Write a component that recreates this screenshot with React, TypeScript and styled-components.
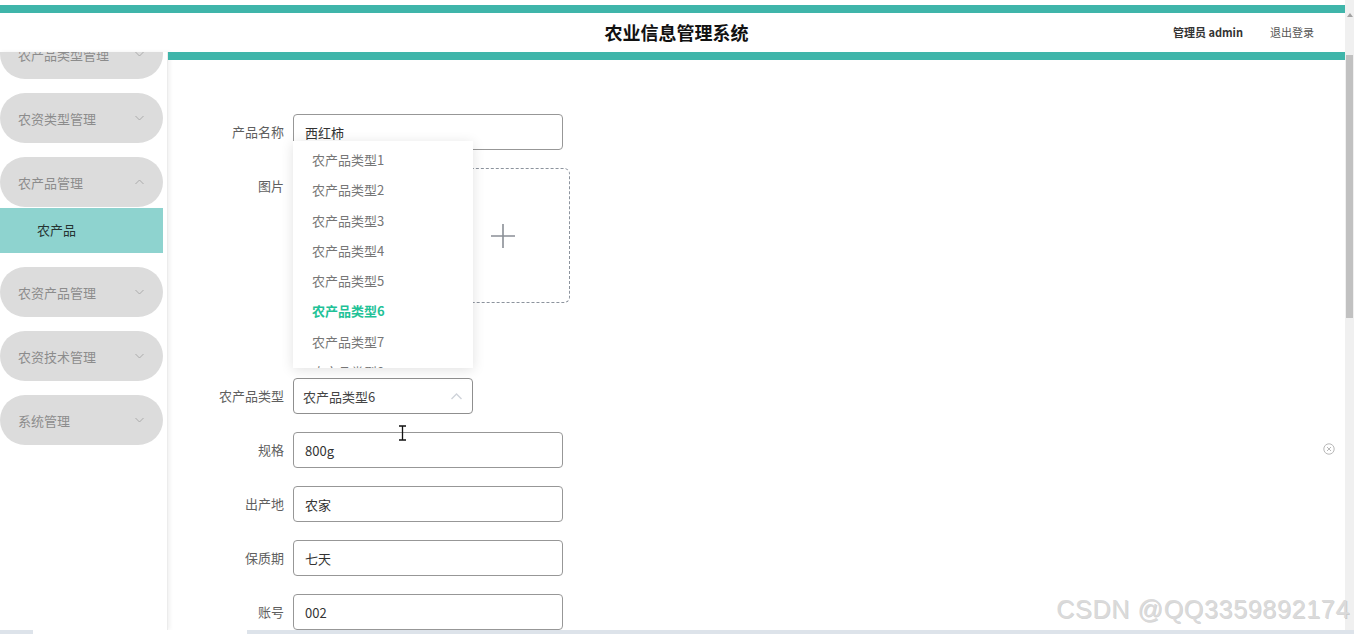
import React from "react";
import styled, { createGlobalStyle } from "styled-components";

const TEAL = "#3fb5aa";
const CJK = `"Noto Sans CJK SC", "Noto Sans", sans-serif`;

const GlobalStyle = createGlobalStyle`
  html, body {
    margin: 0;
    padding: 0;
    overflow: hidden;
    background: #ffffff;
  }
  * {
    box-sizing: border-box;
  }
`;

const Root = styled.div`
  position: relative;
  width: 1354px;
  height: 634px;
  display: flex;
  flex-direction: column;
  font-family: ${CJK};
  overflow: hidden;
`;

const Viewport = styled.div`
  height: 630px;
  display: flex;
`;

const Page = styled.div`
  flex: 1;
  display: flex;
  flex-direction: column;
  min-width: 0;
`;

const TopGap = styled.div`
  height: 5px;
  background: #ffffff;
`;

const TealBar = styled.div`
  height: 8px;
  background: ${TEAL};
`;

const Header = styled.header`
  height: 39px;
  display: flex;
  align-items: center;
  position: relative;
  padding-right: 31px;
`;

const Title = styled.h1`
  margin: 0;
  position: absolute;
  left: 8px;
  right: 0;
  top: 8px;
  line-height: 22px;
  text-align: center;
  font-size: 18px;
  font-weight: 700;
  color: #111;
  pointer-events: none;
`;

const UserBox = styled.div`
  margin-left: auto;
  display: flex;
  align-items: center;
  gap: 27px;
  font-size: 11px;
  margin-top: -2px;
`;

const UserName = styled.span`
  font-weight: 700;
  color: #333;
`;

const Logout = styled.span`
  color: #555;
`;

const Body = styled.div`
  flex: 1;
  display: flex;
  min-height: 0;
`;

const Sidebar = styled.aside`
  width: 168px;
  flex-shrink: 0;
  overflow: hidden;
  border-right: 1px solid #ececec;
  box-shadow: 2px 0 4px rgba(0, 0, 0, 0.06);
  padding-top: 1px;
`;

/* the menu is scrolled a little: the first entry runs under the header */
const MenuList = styled.ul`
  list-style: none;
  margin: -24px 0 0;
  padding: 0;
  width: 163px;
  display: flex;
  flex-direction: column;
  gap: 14px;
`;

const MenuGroup = styled.li`
  display: flex;
  flex-direction: column;
`;

const Pill = styled.div`
  height: 50px;
  border-radius: 25px;
  background: #dcdcdc;
  display: flex;
  align-items: center;
  justify-content: space-between;
  padding: 0 19px 0 18px;
  font-size: 13px;
  color: #8c8c8c;
`;

const SubItem = styled.div`
  margin-top: 1px;
  height: 45px;
  background: #8ed3cf;
  display: flex;
  align-items: center;
  padding: 0 0 3px 37px;
  font-size: 13px;
  color: #263332;
`;

const Main = styled.main`
  position: relative;
  flex: 1;
  display: flex;
  flex-direction: column;
  min-width: 0;
`;

const MainBand = styled.div`
  height: 8px;
  background: ${TEAL};
`;

const Content = styled.div`
  flex: 1;
  padding-top: 54px;
  overflow: hidden;
`;

const Form = styled.form`
  display: flex;
  flex-direction: column;
`;

const FormItem = styled.div<{ $gap?: number }>`
  display: flex;
  align-items: flex-start;
  margin-bottom: ${({ $gap }) => ($gap ?? 18)}px;
`;

const Label = styled.label`
  width: 125px;
  flex-shrink: 0;
  padding-right: 9px;
  text-align: right;
  line-height: 36px;
  font-size: 13px;
  color: #5f5f5f;
`;

const Field = styled.div`
  position: relative;
`;

const Input = styled.div`
  width: 270px;
  height: 36px;
  border: 1px solid #979797;
  border-radius: 4px;
  display: flex;
  align-items: center;
  padding-left: 11px;
  font-size: 13px;
  color: #333;
`;

const UploadRow = styled.div`
  display: flex;
  gap: 7px;
`;

const PreviewCard = styled.div`
  width: 135px;
  height: 135px;
  border-radius: 6px;
  background: #fafafa;
`;

const UploadBox = styled.div`
  width: 135px;
  height: 135px;
  border: 1px dashed #8c939d;
  border-radius: 6px;
  display: flex;
  align-items: center;
  justify-content: center;
`;

const Select = styled.div`
  width: 180px;
  height: 36px;
  border: 1px solid #8f8f8f;
  border-radius: 4px;
  display: flex;
  align-items: center;
  justify-content: space-between;
  padding: 0 10px 0 9px;
  font-size: 13px;
  color: #444;
`;

const Dropdown = styled.ul`
  position: absolute;
  left: 0;
  bottom: calc(100% + 10px);
  width: 180px;
  height: 227px;
  margin: 0;
  padding: 4px 0 0;
  list-style: none;
  background: #fff;
  box-shadow: 0 2px 12px rgba(0, 0, 0, 0.12);
  overflow: hidden;
  z-index: 5;
`;

const Option = styled.li<{ $active?: boolean }>`
  height: 30.3px;
  line-height: 30.3px;
  padding-left: 19px;
  font-size: 13px;
  color: ${({ $active }) => ($active ? "#1fc297" : "#767676")};
  font-weight: ${({ $active }) => ($active ? 700 : 400)};
`;

const TextCursor = styled.svg`
  position: absolute;
  left: 230px;
  top: 373px;
  z-index: 6;
`;

const CloseBadge = styled.svg`
  position: absolute;
  right: 10px;
  top: 391px;
`;

const Scrollbar = styled.div`
  width: 9px;
  flex-shrink: 0;
  background: #f0f0f0;
  display: flex;
  flex-direction: column;
  align-items: center;
  padding-top: 13px;
`;

const ScrollArrow = styled.div`
  width: 0;
  height: 0;
  border-left: 3px solid transparent;
  border-right: 3px solid transparent;
  border-bottom: 4px solid #a3a3a3;
`;

const ScrollThumb = styled.div`
  margin-top: 38px;
  width: 7px;
  height: 263px;
  background: #c1c1c1;
`;

const Taskbar = styled.div`
  height: 4px;
  display: flex;
  background: #dde3ea;
`;

const TaskSegment = styled.div<{ $width: number; $color: string }>`
  width: ${({ $width }) => $width}px;
  background: ${({ $color }) => $color};
`;

const Watermark = styled.div`
  position: absolute;
  right: 4px;
  bottom: 10px;
  font-family: "Liberation Sans", Arial, sans-serif;
  font-size: 25px;
  letter-spacing: 0.7px;
  color: #dadada;
  text-shadow: 1px 1px 0 rgba(110, 110, 110, 0.3);
  pointer-events: none;
`;

const Chevron = ({ up }: { up?: boolean }) => (
  <svg width="9" height="6" viewBox="0 0 9 6">
    <polyline
      points={up ? "0.5,5 4.5,1 8.5,5" : "0.5,1 4.5,5 8.5,1"}
      fill="none"
      stroke="#ababab"
      strokeWidth="1"
    />
  </svg>
);

const menu = [
  { name: "农产品类型管理" },
  { name: "农资类型管理" },
  { name: "农产品管理", open: true, children: ["农产品"] },
  { name: "农资产品管理" },
  { name: "农资技术管理" },
  { name: "系统管理" },
];

const options = Array.from({ length: 8 }, (_, i) => `农产品类型${i + 1}`);

const fields = [
  { label: "规格", value: "800g" },
  { label: "出产地", value: "农家" },
  { label: "保质期", value: "七天" },
  { label: "账号", value: "002" },
];

export default function App() {
  return (
    <>
      <GlobalStyle />
      <Root>
        <Viewport>
          <Page>
            <TopGap />
            <TealBar />
            <Header>
              <Title>农业信息管理系统</Title>
              <UserBox>
                <UserName>管理员 admin</UserName>
                <Logout>退出登录</Logout>
              </UserBox>
            </Header>
            <Body>
              <Sidebar>
                <MenuList>
                  {menu.map((m) => (
                    <MenuGroup key={m.name}>
                      <Pill>
                        <span>{m.name}</span>
                        <Chevron up={m.open} />
                      </Pill>
                      {m.children?.map((c) => (
                        <SubItem key={c}>{c}</SubItem>
                      ))}
                    </MenuGroup>
                  ))}
                </MenuList>
              </Sidebar>
              <Main>
                <MainBand />
                <Content>
                  <Form>
                    <FormItem>
                      <Label>产品名称</Label>
                      <Input>西红柿</Input>
                    </FormItem>
                    <FormItem $gap={75}>
                      <Label>图片</Label>
                      <UploadRow>
                        <PreviewCard />
                        <UploadBox>
                          <svg width="26" height="26" viewBox="0 0 26 26">
                            <path d="M13 1v24M1 13h24" stroke="#8a8f96" strokeWidth="1.6" />
                          </svg>
                        </UploadBox>
                      </UploadRow>
                    </FormItem>
                    <FormItem>
                      <Label>农产品类型</Label>
                      <Field>
                        <Dropdown>
                          {options.map((o, i) => (
                            <Option key={o} $active={i === 5}>
                              {o}
                            </Option>
                          ))}
                        </Dropdown>
                        <Select>
                          <span>农产品类型6</span>
                          <svg width="11" height="7" viewBox="0 0 11 7">
                            <polyline points="0.5,6 5.5,1 10.5,6" fill="none" stroke="#cfd3da" strokeWidth="1.4" />
                          </svg>
                        </Select>
                      </Field>
                    </FormItem>
                    {fields.map((f) => (
                      <FormItem key={f.label}>
                        <Label>{f.label}</Label>
                        <Input>{f.value}</Input>
                      </FormItem>
                    ))}
                  </Form>
                </Content>
                <TextCursor width="9" height="16" viewBox="0 0 9 16">
                  <path d="M1 1h7M4.5 1v14M1 15h7" stroke="#111" strokeWidth="1.3" fill="none" />
                </TextCursor>
                <CloseBadge width="12" height="12" viewBox="0 0 12 12">
                  <circle cx="6" cy="6" r="5.2" fill="none" stroke="#b8b8b8" strokeWidth="1" />
                  <path d="M4 4l4 4M8 4l-4 4" stroke="#b8b8b8" strokeWidth="1" />
                </CloseBadge>
              </Main>
            </Body>
          </Page>
          <Scrollbar>
            <ScrollArrow />
            <ScrollThumb />
          </Scrollbar>
        </Viewport>
        <Taskbar>
          <TaskSegment $width={33} $color="#dde3ea" />
          <TaskSegment $width={214} $color="#ffffff" />
        </Taskbar>
        <Watermark>CSDN @QQ3359892174</Watermark>
      </Root>
    </>
  );
}
